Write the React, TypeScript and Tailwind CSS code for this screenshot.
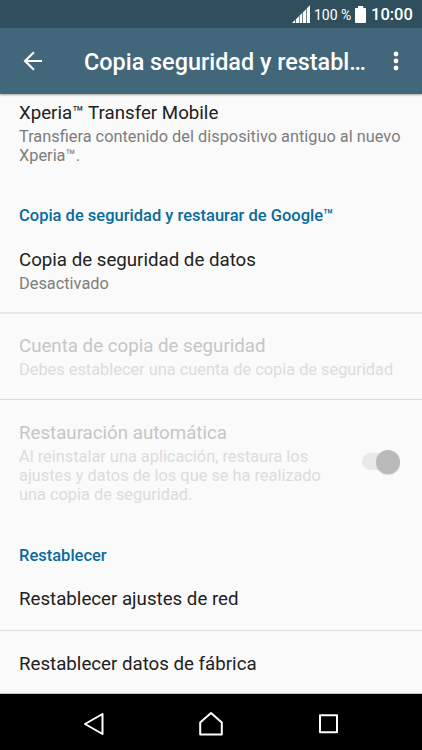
import type { ReactNode } from "react";

function StatusBar() {
  return (
    <div className="flex h-[28px] items-center bg-[#2f4f5d] pl-[292px]">
      <svg className="h-[18px] w-[18px] shrink-0" viewBox="0 0 18 18" fill="white" aria-hidden="true">
        <path d="M0 18 L3 15 V18Z M3.8 14.2 L7 11.2 V18 H3.8Z M7.6 10.6 L10.3 7.8 V18 H7.6Z M11 7.2 L14 4.2 V18 H11Z M14.7 3.5 L18 0.3 V18 H14.7Z" />
      </svg>
      <span className="ml-[4px] w-[37px] shrink-0 whitespace-nowrap pt-[2px] text-[14px]">100 %</span>
      <svg className="ml-[4px] h-[17px] w-[11px] shrink-0" viewBox="0 0 11 17" fill="white" aria-hidden="true">
        <path d="M3 0H8.2V2H10.2Q11 2 11 2.8V16.2Q11 17 10.2 17H.8Q0 17 0 16.2V2.8Q0 2 .8 2H3Z" />
      </svg>
      <span className="ml-[5px] whitespace-nowrap pt-[3px] text-[16.5px] font-medium">10:00</span>
    </div>
  );
}

function TitleBar() {
  return (
    <div className="flex h-[66px] items-center pl-[23px]">
      <button className="h-[20px] w-[20px] shrink-0" aria-label="Atrás">
        <svg className="h-[20px] w-[20px]" viewBox="0 0 20 20" fill="none" stroke="white" strokeWidth="2.2">
          <path d="M19 10H2.2M10.9 1.2L2.1 10L10.9 18.8" />
        </svg>
      </button>
      <h1 className="ml-[41px] w-[309px] shrink-0 whitespace-nowrap pt-[3px] text-[23.4px] font-medium">
        Copia seguridad y restabl…
      </h1>
      <button className="h-[20px] w-[6px] shrink-0" aria-label="Más opciones">
        <svg className="h-[20px] w-[6px]" viewBox="0 0 6 20" fill="white">
          <circle cx="3" cy="3" r="2.4" />
          <circle cx="3" cy="10" r="2.4" />
          <circle cx="3" cy="17" r="2.4" />
        </svg>
      </button>
    </div>
  );
}

type ItemProps = { title: string; lines?: string[]; disabled?: boolean };

function Item({ title, lines = [], disabled = false }: ItemProps) {
  return (
    <div className="whitespace-nowrap">
      <p className={`text-[18.7px] leading-[24px] ${disabled ? "text-[#c6c6c6]" : "text-[#212121]"}`}>{title}</p>
      {lines.length > 0 && (
        <div className={`mt-[2px] text-[16.35px] leading-[19px] ${disabled ? "text-[#dcdcdc]" : "text-[#7d7d7d]"}`}>
          {lines.map((line) => (
            <p key={line}>{line}</p>
          ))}
        </div>
      )}
    </div>
  );
}

function SectionTitle({ children }: { children: ReactNode }) {
  return (
    <h2 className="whitespace-nowrap px-[19px] text-[16.5px] leading-[20px] font-medium text-[#0a6a9c]">
      {children}
    </h2>
  );
}

export default function App() {
  return (
    <div className="flex h-[750px] w-[422px] flex-col overflow-hidden bg-[#fafafa] font-['Roboto',sans-serif]">
      <header className="z-10 h-[94px] shrink-0 bg-[#42667a] text-white shadow-[0_1px_2px_rgba(0,0,0,0.35)]">
        <StatusBar />
        <TitleBar />
      </header>
      <main className="flex-1">
        <div className="px-[19px] pt-[7px] pb-[41px]">
          <Item
            title="Xperia™ Transfer Mobile"
            lines={["Transfiera contenido del dispositivo antiguo al nuevo", "Xperia™."]}
          />
        </div>
        <SectionTitle>Copia de seguridad y restaurar de Google™</SectionTitle>
        <div className="border-b-2 border-[#e8e8e8] px-[19px] pt-[22px] pb-[19px]">
          <Item title="Copia de seguridad de datos" lines={["Desactivado"]} />
        </div>
        <div className="border-b border-[#dadada] px-[19px] pt-[20px] pb-[20px]">
          <Item
            title="Cuenta de copia de seguridad"
            lines={["Debes establecer una cuenta de copia de seguridad"]}
            disabled
          />
        </div>
        <div className="flex items-center justify-between pt-[21px] pr-[22px] pb-[42px] pl-[19px]">
          <Item
            title="Restauración automática"
            lines={[
              "Al reinstalar una aplicación, restaura los",
              "ajustes y datos de los que se ha realizado",
              "una copia de seguridad.",
            ]}
            disabled
          />
          <div className="mb-[2px] flex h-[17px] w-[38px] items-center justify-end rounded-full bg-[#e9e9e9]">
            <div className="h-[24px] w-[24px] shrink-0 rounded-full bg-[#bababa] shadow-[0_1px_1px_rgba(0,0,0,0.15)]" />
          </div>
        </div>
        <SectionTitle>Restablecer</SectionTitle>
        <div className="border-b border-[#dcdcdc] px-[19px] pt-[21px] pb-[19px]">
          <Item title="Restablecer ajustes de red" />
        </div>
        <div className="border-b border-[#c4c4c4] px-[19px] pt-[21px] pb-[17px]">
          <Item title="Restablecer datos de fábrica" />
        </div>
      </main>
      <nav className="flex h-[56px] shrink-0 items-center justify-between bg-black pt-[3px] pr-[84px] pl-[82px]">
        <svg className="h-[24px] w-[22px]" viewBox="0 0 22 24" fill="none" stroke="white" strokeWidth="2" strokeLinejoin="round" aria-hidden="true">
          <path d="M3 12L20.5 2V22Z" />
        </svg>
        <svg className="h-[26px] w-[24px]" viewBox="0 0 24 26" fill="none" stroke="white" strokeWidth="2" strokeLinejoin="round" aria-hidden="true">
          <path d="M1.2 11.5L12 2L22.8 11.5V23.5H1.2Z" />
        </svg>
        <svg className="h-[20px] w-[20px]" viewBox="0 0 20 20" fill="none" stroke="white" strokeWidth="2" strokeLinejoin="round" aria-hidden="true">
          <path d="M2 1.3H19V18.3H2Z" />
        </svg>
      </nav>
    </div>
  );
}
